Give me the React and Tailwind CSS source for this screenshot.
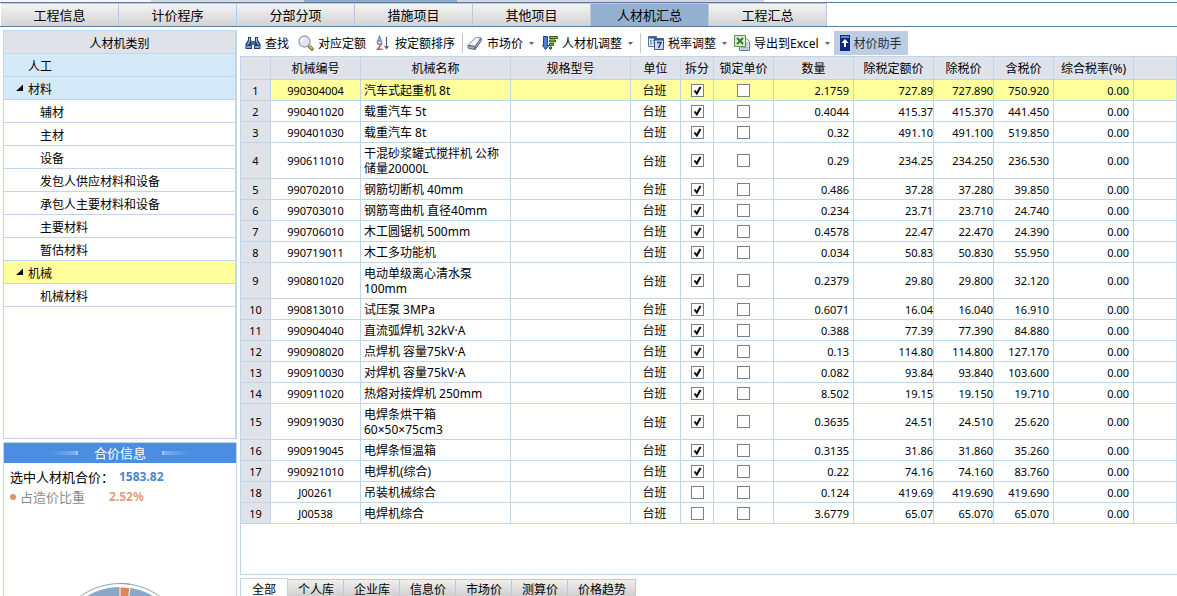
import { useState } from 'react';

const mainTabs = ['工程信息', '计价程序', '分部分项', '措施项目', '其他项目', '人材机汇总', '工程汇总'];

const categories = [
  { label: '人工', level: 0, tone: 'blue' },
  { label: '材料', level: 0, tone: 'blue', open: true },
  { label: '辅材', level: 1 },
  { label: '主材', level: 1 },
  { label: '设备', level: 1 },
  { label: '发包人供应材料和设备', level: 1 },
  { label: '承包人主要材料和设备', level: 1 },
  { label: '主要材料', level: 1 },
  { label: '暂估材料', level: 1 },
  { label: '机械', level: 0, tone: 'yellow', open: true },
  { label: '机械材料', level: 1 },
];

const toneClass = {
  blue: 'bg-[#d5eaf8]',
  yellow: 'bg-[#ffff9c]',
};

const columns = [
  { label: '', width: 'w-[30px]' },
  { label: '机械编号', width: 'w-[90px]' },
  { label: '机械名称', width: 'w-[150px]' },
  { label: '规格型号', width: 'w-[120px]' },
  { label: '单位', width: 'w-[50px]' },
  { label: '拆分', width: 'w-[33px]' },
  { label: '锁定单价', width: 'w-[60px]' },
  { label: '数量', width: 'w-20' },
  { label: '除税定额价', width: 'w-20' },
  { label: '除税价', width: 'w-[60px]' },
  { label: '含税价', width: 'w-[60px]' },
  { label: '综合税率(%)', width: 'w-20' },
  { label: '', width: '' },
];

// code, name, split, quantity, quota price, price without tax, price with tax
const rows = [
  ['990304004', '汽车式起重机 8t', true, '2.1759', '727.89', '727.890', '750.920'],
  ['990401020', '载重汽车 5t', true, '0.4044', '415.37', '415.370', '441.450'],
  ['990401030', '载重汽车 8t', true, '0.32', '491.10', '491.100', '519.850'],
  ['990611010', '干混砂浆罐式搅拌机 公称\n储量20000L', true, '0.29', '234.25', '234.250', '236.530'],
  ['990702010', '钢筋切断机 40mm', true, '0.486', '37.28', '37.280', '39.850'],
  ['990703010', '钢筋弯曲机 直径40mm', true, '0.234', '23.71', '23.710', '24.740'],
  ['990706010', '木工圆锯机 500mm', true, '0.4578', '22.47', '22.470', '24.390'],
  ['990719011', '木工多功能机', true, '0.034', '50.83', '50.830', '55.950'],
  ['990801020', '电动单级离心清水泵\n100mm', true, '0.2379', '29.80', '29.800', '32.120'],
  ['990813010', '试压泵 3MPa', true, '0.6071', '16.04', '16.040', '16.910'],
  ['990904040', '直流弧焊机 32kV·A', true, '0.388', '77.39', '77.390', '84.880'],
  ['990908020', '点焊机 容量75kV·A', true, '0.13', '114.80', '114.800', '127.170'],
  ['990910030', '对焊机 容量75kV·A', true, '0.082', '93.84', '93.840', '103.600'],
  ['990911020', '热熔对接焊机 250mm', true, '8.502', '19.15', '19.150', '19.710'],
  ['990919030', '电焊条烘干箱\n60×50×75cm3', true, '0.3635', '24.51', '24.510', '25.620'],
  ['990919045', '电焊条恒温箱', true, '0.3135', '31.86', '31.860', '35.260'],
  ['990921010', '电焊机(综合)', true, '0.22', '74.16', '74.160', '83.760'],
  ['J00261', '吊装机械综合', false, '0.124', '419.69', '419.690', '419.690'],
  ['J00538', '电焊机综合', false, '3.6779', '65.07', '65.070', '65.070'],
];

const priceTabs = ['全部', '个人库', '企业库', '信息价', '市场价', '测算价', '价格趋势'];

function FindIcon() {
  return (
    <svg viewBox="0 0 16 16" className="h-4 w-4">
      <path d="M3 2h3v3l1 2v7H.500V9L3 5zM10 2h3v3l2.500 4v5H9V7l1-2z" fill="#24406f" />
      <path d="M6 6h4v4H6z" fill="#49699e" />
      <path d="M4 3h1v3l-2 4H2l2-4zM11 3h1v3l2 4h-1l-2-4z" fill="#b9cbe8" />
      <path d="M1.500 11H6v2H1.500zM10 11h4.500v2H10z" fill="#86a2d2" />
    </svg>
  );
}

function MagnifierIcon() {
  return (
    <svg viewBox="0 0 16 16" className="h-4 w-4">
      <path d="M10.500 10.500l3.500 3.500" stroke="#7d6a35" strokeWidth="3.400" strokeLinecap="round" />
      <path d="M11 10.700l2.700 2.700" stroke="#dcc36a" strokeWidth="1.600" strokeLinecap="round" />
      <circle cx="6.500" cy="6.500" r="5.500" fill="#dfe7f6" stroke="#9a9fae" strokeWidth="1.300" />
      <path d="M3 6.500A3.500 3.500 0 0 1 6.500 3" stroke="#fff" strokeWidth="1.600" fill="none" />
    </svg>
  );
}

function SortIcon() {
  return (
    <svg viewBox="0 0 16 16" className="h-4 w-4" fill="none">
      <path d="M2 8L4.500 1.500 7 8M3 6h3" stroke="#6d86b5" strokeWidth="1.400" />
      <path d="M2 9h4.500L2.500 14.300H7.500" stroke="#b4606a" strokeWidth="1.500" />
      <path d="M11.500 2v11M9.500 11l2 2.500 2-2.500" stroke="#555b66" strokeWidth="1.200" />
    </svg>
  );
}

function EraserIcon() {
  return (
    <svg viewBox="0 0 16 16" className="h-4 w-4">
      <path d="M1 10.500L8 3q.6-.6 1.500-.5l4.500.5L8 11.500z" fill="#f4f6f9" stroke="#7c8491" strokeLinejoin="round" />
      <path d="M1 10.500l7 1v3l-6-1q-1-.3-1-1zM8 11.500L14 3l.500 2.500-6.500 9z" fill="#a8b0be" stroke="#5d6675" strokeLinejoin="round" />
    </svg>
  );
}

function AdjustIcon() {
  return (
    <svg viewBox="0 0 16 16" className="h-4 w-4">
      <path d="M1.500 1.500h4v9h1.500L3.500 14.500.500 10.500h1z" fill="#4f80d4" stroke="#23448c" />
      <path d="M7.500 1.500h8v2h-8zM7.500 5h6v2h-6zM7.500 8.500h4v2h-4zM7.500 12h2v2h-2z" fill="#8cb860" stroke="#33591f" />
    </svg>
  );
}

function RateIcon() {
  return (
    <svg viewBox="0 0 16 16" className="h-4 w-4" fill="none">
      <path d="M.500 1.500h8v10h-8z" fill="#dfe7f5" stroke="#5c75a6" />
      <path d="M.500 1.500h8v2h-8z" fill="#3e5f9f" />
      <path d="M3 5v5M2 6l1-1M5 5.500h2M5 8h2" stroke="#5c75a6" />
      <path d="M6.500 3.500h9v11h-9z" fill="#cddbf2" stroke="#39558f" />
      <path d="M6.500 3.500h9v2h-9z" fill="#34569b" />
      <path d="M9 7.500h4L10.500 13" stroke="#27437f" strokeWidth="1.500" />
    </svg>
  );
}

function ExcelIcon() {
  return (
    <svg viewBox="0 0 16 16" className="h-4 w-4" fill="none">
      <path d="M5.500 3.500h7l3 3v9h-10z" fill="#eef4fb" stroke="#5e7a9a" />
      <path d="M12 8h2.500M12 10h2.500M7 12.500h7.500M7 14h7.500" stroke="#8eabc6" />
      <path d="M.500.500h11v11H.500z" fill="#dcedcf" stroke="#5c9150" />
      <path d="M3 3l6 6M9 3L3 9" stroke="#2f7d2c" strokeWidth="2" />
    </svg>
  );
}

function HelperIcon() {
  return (
    <svg viewBox="0 0 10 16" className="h-4 w-2.5">
      <path d="M0 0h10v16H0z" fill="#0d2880" />
      <path d="M1 1h8v2H1z" fill="#6d86cc" />
      <path d="M5 4l3.500 4H6v4H4V8H1.500z" fill="#fff" />
    </svg>
  );
}

function Caret() {
  return (
    <svg viewBox="0 0 5 3" className="ml-1.5 h-[3px] w-[5px]">
      <path d="M0 0h5L2.500 3z" fill="#666" />
    </svg>
  );
}

function ToolButton({ icon: Icon, label, menu, className }) {
  return (
    <button type="button" className={`flex h-6 shrink-0 items-center whitespace-nowrap ${className}`}>
      <Icon />
      <span className="ml-1 pt-0.5">{label}</span>
      {menu ? <Caret /> : null}
    </button>
  );
}

function Toolbar() {
  return (
    <div className="flex h-[25px] items-start">
      <ToolButton icon={FindIcon} label="查找" className="ml-[5px]" />
      <ToolButton icon={MagnifierIcon} label="对应定额" className="ml-[9px]" />
      <ToolButton icon={SortIcon} label="按定额排序" className="ml-[9px]" />
      <span className="mt-0.5 ml-[7px] h-5 w-px bg-[#c3c7cd]" />
      <ToolButton icon={EraserIcon} label="市场价" menu className="ml-1" />
      <ToolButton icon={AdjustIcon} label="人材机调整" menu className="ml-2" />
      <span className="mt-0.5 ml-[7px] h-5 w-px bg-[#c3c7cd]" />
      <ToolButton icon={RateIcon} label="税率调整" menu className="ml-[7px]" />
      <ToolButton icon={ExcelIcon} label="导出到Excel" menu className="ml-[7px]" />
      <ToolButton icon={HelperIcon} label="材价助手" className="ml-1 bg-[#bccde4] px-1.5 text-[#26303c]" />
    </div>
  );
}

function Check({ label, checked, onChange }) {
  return (
    <span className="relative inline-flex h-[13px] w-[13px] align-middle">
      <input
        type="checkbox"
        aria-label={label}
        checked={checked}
        onChange={onChange}
        className="h-[13px] w-[13px] appearance-none border border-[#808080] bg-white"
      />
      {checked ? (
        <svg viewBox="0 0 13 13" className="pointer-events-none absolute inset-0 h-[13px] w-[13px]" fill="none">
          <path d="M3.500 6.500l2.300 3L9.500 3" stroke="#000" strokeWidth="2" />
        </svg>
      ) : null}
    </span>
  );
}

function Sidebar() {
  return (
    <aside className="flex w-[234px] shrink-0 flex-col">
      <div className="flex-1 border border-r-2 border-[#c1d6ea] bg-white">
        <h2 className="h-[23px] border-b border-[#c1d6ea] bg-[#dfe2e8] pt-px text-center leading-6">人材机类别</h2>
        <ul>
          {categories.map((item) => (
            <li
              key={item.label}
              className={`flex h-[23px] items-center border-b border-[#c1d6ea] ${item.level ? 'pl-9' : 'pl-3'} ${toneClass[item.tone] ?? ''}`}
            >
              {item.level === 0 ? (
                <svg viewBox="0 0 12 8" className="h-2 w-3">
                  {item.open ? <path d="M7 0.500v6.500H0z" fill="#111" /> : null}
                </svg>
              ) : null}
              <span className="pt-[3px]">{item.label}</span>
            </li>
          ))}
        </ul>
      </div>

      <section className="mt-[3px] flex h-[154px] flex-col border border-b-0 border-[#c1d6ea]">
        <h2 className="flex h-5 items-center justify-center gap-4 bg-[#4a8de3] text-[13px] text-white">
          <span className="flex h-1 items-center">
            <i className="h-1 w-[26px] bg-linear-to-r from-transparent to-[#7db0f0]" />
            <i className="h-1 w-0.5 bg-[#a5c9f5]" />
          </span>
          <span className="pt-0.5">合价信息</span>
          <span className="flex h-1 items-center">
            <i className="h-1 w-0.5 bg-[#a5c9f5]" />
            <i className="h-1 w-[26px] bg-linear-to-l from-transparent to-[#7db0f0]" />
          </span>
        </h2>
        <dl className="mt-1 px-1.5 text-[13px] leading-5">
          <div className="flex">
            <dt className="w-[109px]">选中人材机合价：</dt>
            <dd className="text-xs leading-5 font-bold text-[#4a86d4]">1583.82</dd>
          </div>
          <div className="flex">
            <dt className="flex w-[99px] items-center text-[#8c8c8c]">
              <i className="mr-1 h-1.5 w-1.5 rounded-full bg-[#e0906c]" />
              占造价比重
            </dt>
            <dd className="text-xs leading-5 font-bold text-[#e39c7c]">2.52%</dd>
          </div>
        </dl>
        <svg viewBox="0 0 120 13" className="mx-auto mt-auto h-[13px] w-[120px]">
          <circle cx="60" cy="68" r="67.500" fill="none" stroke="#8ba6c6" />
          <circle cx="60" cy="68" r="64" fill="#8ba6c6" />
          <path d="M60 68V4a64 64 0 0 1 10 .8z" fill="#e0855a" stroke="#fff" />
          <path d="M60 .500a67.500 67.500 0 0 1 10 .700" fill="none" stroke="#e0855a" />
        </svg>
      </section>
    </aside>
  );
}

const cell = 'border-r border-b border-[#bfd6e8] p-0';

function MachineTable() {
  const [split, setSplit] = useState(rows.map((row) => row[2]));
  const [locked, setLocked] = useState(rows.map(() => false));

  const toggle = (setter, index) => {
    setter((list) => list.map((value, i) => (i === index ? !value : value)));
  };

  return (
    <table className="w-full table-fixed border-separate border-spacing-0">
      <thead>
        <tr className="h-[23px] bg-[#dfe2e8]">
          {columns.map((column, index) => (
            <th key={index} className={`${cell} ${column.width} pt-0.5 leading-5 font-normal whitespace-nowrap`}>
              {column.label}
            </th>
          ))}
        </tr>
      </thead>
      <tbody>
        {rows.map(([code, name, , quantity, quota, net, gross], index) => (
          <tr key={code} className={`${name.includes('\n') ? 'h-9' : 'h-[21px]'} ${index === 0 ? 'bg-[#ffff9c]' : ''}`}>
            <td className={`${cell} bg-[#dfe2e8] pt-px text-center text-[11px] leading-4`}>{index + 1}</td>
            <td className={`${cell} pt-px text-center text-[11px] leading-4`}>{code}</td>
            <td className={`${cell} pt-px pl-[3px] leading-[15px] whitespace-pre`}>{name}</td>
            <td className={cell} />
            <td className={`${cell} pt-0.5 pr-0.5 text-center leading-4`}>台班</td>
            <td className={`${cell} text-center leading-3`}>
              <Check label={`拆分 ${code}`} checked={split[index]} onChange={() => toggle(setSplit, index)} />
            </td>
            <td className={`${cell} text-center leading-3`}>
              <Check label={`锁定单价 ${code}`} checked={locked[index]} onChange={() => toggle(setLocked, index)} />
            </td>
            <td className={`${cell} pt-px pr-1 text-right text-[11px] leading-4`}>{quantity}</td>
            <td className={`${cell} pt-px text-right text-[11px] leading-4`}>{quota}</td>
            <td className={`${cell} pt-px text-right text-[11px] leading-4`}>{net}</td>
            <td className={`${cell} pt-px pr-1 text-right text-[11px] leading-4`}>{gross}</td>
            <td className={`${cell} pt-px pr-1 text-right text-[11px] leading-4`}>0.00</td>
            <td className={cell} />
          </tr>
        ))}
      </tbody>
    </table>
  );
}

export default function App() {
  const [activeTab, setActiveTab] = useState('人材机汇总');
  const [priceTab, setPriceTab] = useState('全部');

  return (
    <div className="flex h-screen flex-col overflow-hidden bg-white font-['Noto_Sans','Noto_Sans_CJK_SC',sans-serif] text-xs text-black">
      <div className="flex h-[3px] shrink-0 border-b border-[#5f7b9e]">
        <i className="w-[151px] bg-[#f4f6f8]" />
        <i className="w-[153px] bg-[#d5dbe1]" />
        <i className="w-[153px] bg-[#8faccb]" />
        <i className="w-[154px] border-r border-[#b4cbe2] bg-[#d5d8db]" />
        <i className="w-[153px] bg-[#d5d8db]" />
      </div>
      <nav className="flex h-6 shrink-0 border-b border-[#5f7b9e] pl-px text-[13px]">
        {mainTabs.map((tab) => (
          <button
            key={tab}
            type="button"
            onClick={() => setActiveTab(tab)}
            className={`w-[118px] border-t border-r border-[#b4cbe2] pt-0.5 ${tab === activeTab ? 'bg-[#94b0d0]' : 'bg-linear-to-b from-[#f4f4f4] to-[#d3d3d3]'}`}
          >
            {tab}
          </button>
        ))}
      </nav>

      <div className="flex min-h-0 flex-1 gap-[3px] pt-[3px] pl-[3px]">
        <Sidebar />
        <main className="flex min-w-0 flex-1 flex-col pt-px">
          <Toolbar />
          <div className="min-h-0 flex-1 border border-r-0 border-[#bfd6e8]">
            <MachineTable />
          </div>
          <div className="mt-[3px] flex h-[18px] shrink-0 items-end leading-3">
            {priceTabs.map((tab) => (
              <button
                key={tab}
                type="button"
                onClick={() => setPriceTab(tab)}
                className={
                  tab === priceTab
                    ? 'h-[18px] w-12 shrink-0 border border-b-0 border-[#c1d6ea] bg-white pt-1'
                    : 'h-[17px] shrink-0 border-t border-r border-[#b4cbe2] bg-linear-to-b from-[#f0f0f0] to-[#cfcfcf] pt-1 pr-[9px] pl-2.5'
                }
              >
                {tab}
              </button>
            ))}
          </div>
        </main>
      </div>
    </div>
  );
}
